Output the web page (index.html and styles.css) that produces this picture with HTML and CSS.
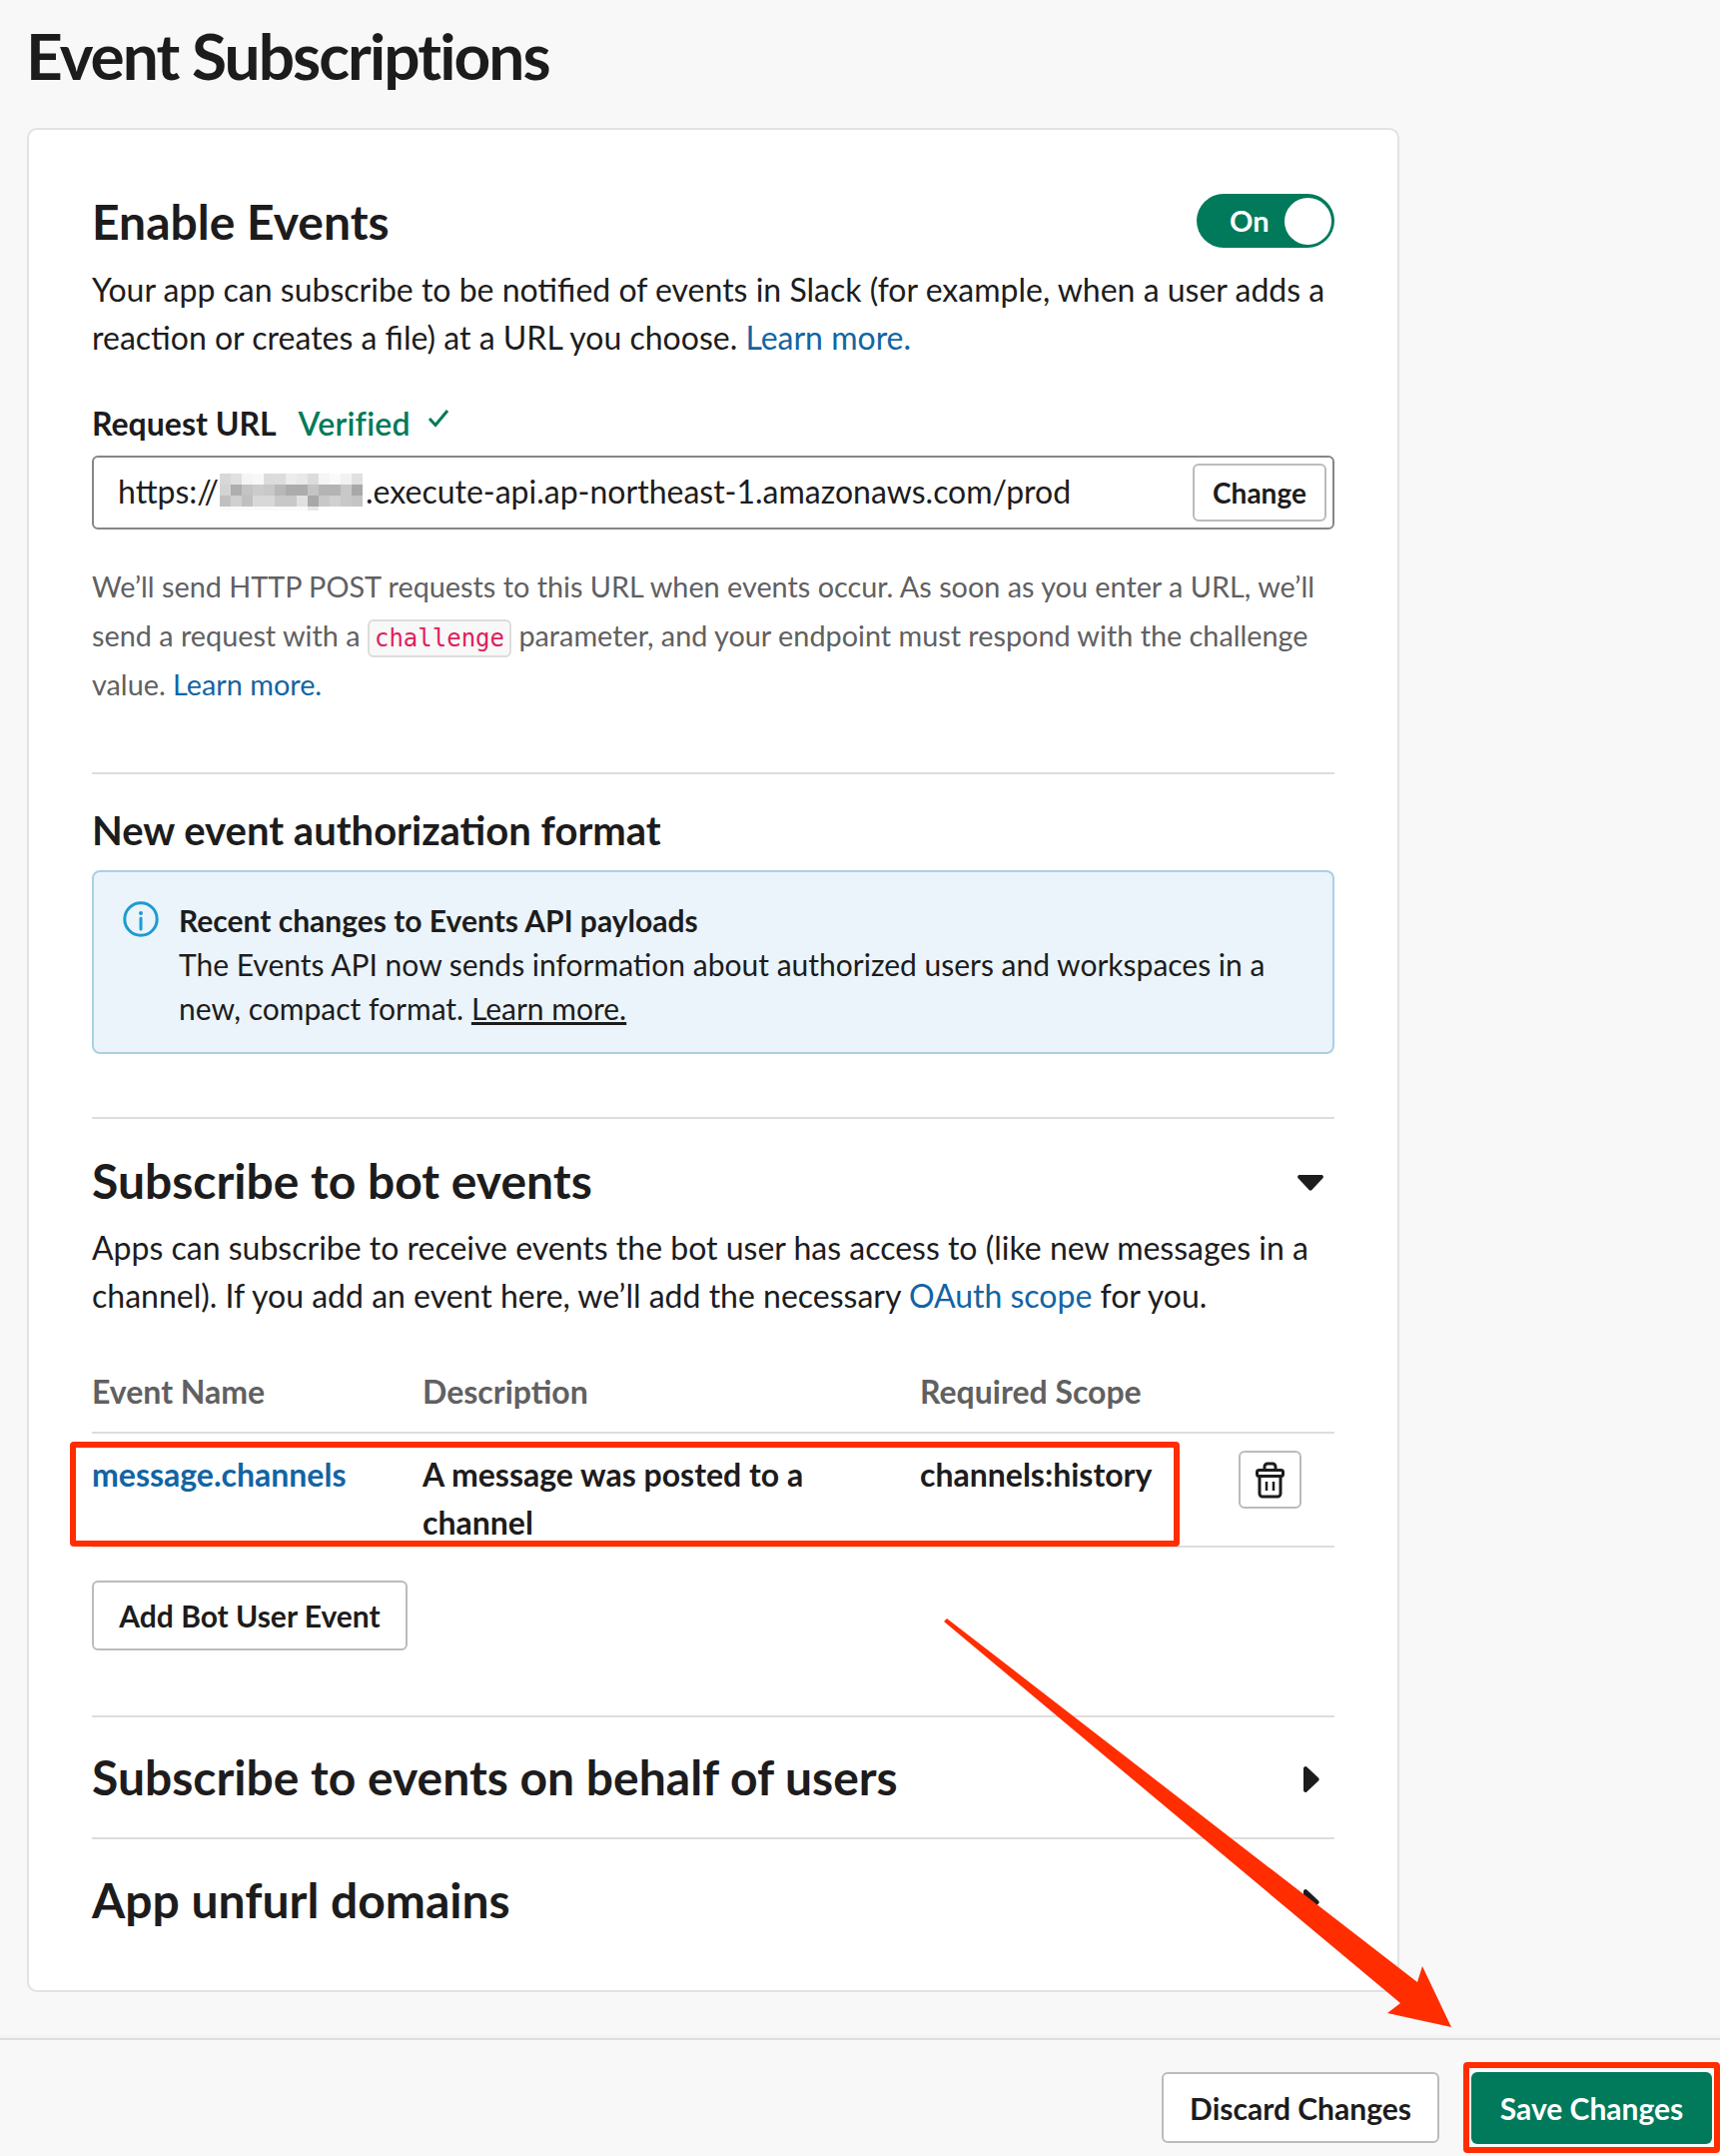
FILE: index.html
```html
<!DOCTYPE html>
<html lang="en">
<head>
  <meta charset="UTF-8" />
  <title>Event Subscriptions</title>
  <link rel="stylesheet" href="styles.css">
</head>
<body>
<div class="page">

  <h1 class="page-title">Event Subscriptions</h1>

  <main class="card">

    <!-- ENABLE EVENTS -->
    <div class="section-head">
      <h2>Enable Events</h2>
      <div class="toggle"><span>On</span><i class="knob"></i></div>
    </div>
    <p class="copy">Your app can subscribe to be notified of events in Slack (for example, when a user adds a reaction or creates a file) at a URL you choose. <a href="#">Learn more.</a></p>

    <div class="url-label">
      <strong>Request URL</strong>
      <span class="verified">Verified</span>
      <svg class="check" width="22" height="20" viewBox="0 0 22 20"><path d="M2 11l6 6.5L20 3" fill="none" stroke="#007a5a" stroke-width="3"/></svg>
    </div>
    <div class="url-input">
      <span class="url-text">https://<svg class="blur" width="143" height="44" viewBox="0 0 13 4" shape-rendering="crispEdges">
        <g><rect x="0" width="1" height="1" fill="#d8d8d8"/><rect x="1" width="1" height="1" fill="#e0e0e0"/><rect x="2" width="1" height="1" fill="#f5f5f5"/><rect x="3" width="1" height="1" fill="#f8f8f8"/><rect x="4" width="2" height="1" fill="#dcdcdc"/><rect x="6" width="1" height="1" fill="#ececec"/><rect x="7" width="1" height="1" fill="#e8e8e8"/><rect x="8" width="1" height="1" fill="#dcdcdc"/><rect x="9" width="1" height="1" fill="#f5f5f5"/><rect x="10" width="1" height="1" fill="#fafafa"/><rect x="11" width="1" height="1" fill="#f2f2f2"/><rect x="12" width="1" height="1" fill="#e0e0e0"/></g>
        <g><rect x="0" y="1" width="1" height="1" fill="#d4d4d4"/><rect x="1" y="1" width="1" height="1" fill="#aeaeae"/><rect x="2" y="1" width="1" height="1" fill="#c4c4c4"/><rect x="3" y="1" width="1" height="1" fill="#cccccc"/><rect x="4" y="1" width="1" height="1" fill="#c8c8c8"/><rect x="5" y="1" width="1" height="1" fill="#b8b8b8"/><rect x="6" y="1" width="2" height="1" fill="#acacac"/><rect x="8" y="1" width="1" height="1" fill="#c4c4c4"/><rect x="9" y="1" width="2" height="1" fill="#b4b4b4"/><rect x="11" y="1" width="1" height="1" fill="#c8c8c8"/><rect x="12" y="1" width="1" height="1" fill="#a8a8a8"/></g>
        <g><rect x="0" y="2" width="1" height="1" fill="#c0c0c0"/><rect x="1" y="2" width="1" height="1" fill="#d0d0d0"/><rect x="2" y="2" width="1" height="1" fill="#c0c0c0"/><rect x="3" y="2" width="2" height="1" fill="#d8d8d8"/><rect x="5" y="2" width="2" height="1" fill="#c8c8c8"/><rect x="7" y="2" width="1" height="1" fill="#e0e0e0"/><rect x="8" y="2" width="1" height="1" fill="#a8a8a8"/><rect x="9" y="2" width="1" height="1" fill="#c8c8c8"/><rect x="10" y="2" width="1" height="1" fill="#d0d0d0"/><rect x="11" y="2" width="1" height="1" fill="#c8c8c8"/><rect x="12" y="2" width="1" height="1" fill="#c4c4c4"/></g>
        <g><rect x="0" y="3" width="8" height="0.4" fill="#fafafa"/><rect x="8" y="3" width="1" height="0.4" fill="#e8e8e8"/></g>
      </svg>.execute-api.ap-northeast-1.amazonaws.com/prod</span>
      <button class="btn btn-small">Change</button>
    </div>

    <p class="help">We’ll send HTTP POST requests to this URL when events occur. As soon as you enter a URL, we’ll send a request with a <code>challenge</code> parameter, and your endpoint must respond with the challenge value. <a href="#">Learn more.</a></p>

    <hr class="rule rule-auth">

    <!-- AUTH FORMAT -->
    <h3>New event authorization format</h3>
    <div class="notice">
      <svg class="notice-icon" width="36" height="36" viewBox="0 0 36 36">
        <circle cx="18" cy="18" r="16.2" fill="none" stroke="#1d9bd1" stroke-width="3"/>
        <circle cx="18" cy="12" r="2" fill="#1d9bd1"/>
        <path d="M18 17v11" stroke="#1d9bd1" stroke-width="3" stroke-linecap="round"/>
      </svg>
      <div>
        <strong>Recent changes to Events API payloads</strong><br>
        The Events API now sends information about authorized users and workspaces in a new, compact format. <a href="#">Learn more.</a>
      </div>
    </div>

    <hr class="rule rule-bot">

    <!-- BOT EVENTS -->
    <div class="section-head bot-head">
      <h2>Subscribe to bot events</h2>
      <svg class="chevron-down" width="26" height="16" viewBox="0 0 26 16"><path d="M2 0h22a2 2 0 0 1 1.4 3.3L14.4 15a2 2 0 0 1-2.8 0L.6 3.3A2 2 0 0 1 2 0z" fill="#1d1c1d"/></svg>
    </div>
    <p class="copy">Apps can subscribe to receive events the bot user has access to (like new messages in a channel). If you add an event here, we’ll add the necessary <a href="#">OAuth scope</a> for you.</p>

    <div class="events-table">
      <div class="events-row events-header">
        <span>Event Name</span>
        <span>Description</span>
        <span>Required Scope</span>
      </div>
      <div class="events-row events-item">
        <a href="#">message.channels</a>
        <span class="event-desc">A message was posted to a channel</span>
        <span>channels:history</span>
        <button class="btn btn-trash">
          <svg width="29" height="37" viewBox="0 0 29 37" fill="none" stroke="#1d1c1d" stroke-width="3">
            <path d="M9 9V5a3 3 0 0 1 3-3h5a3 3 0 0 1 3 3v4"/>
            <rect x="1.5" y="8.5" width="26" height="6" rx="2"/>
            <path d="M4 14.5V32a3 3 0 0 0 3 3h15a3 3 0 0 0 3-3V14.5"/>
            <path d="M11 20v9M18 20v9" stroke-width="2.5"/>
          </svg>
        </button>
      </div>
    </div>

    <button class="btn btn-add">Add Bot User Event</button>

    <!-- COLLAPSED SECTIONS -->
    <div class="collapsed first">
      <h2>Subscribe to events on behalf of users</h2>
      <svg width="16" height="26" viewBox="0 0 16 26"><path d="M0 2a2 2 0 0 1 3.3-1.4L15 11.6a2 2 0 0 1 0 2.8L3.3 25.4A2 2 0 0 1 0 24z" fill="#1d1c1d"/></svg>
    </div>
    <div class="collapsed last">
      <h2>App unfurl domains</h2>
      <svg width="16" height="26" viewBox="0 0 16 26"><path d="M0 2a2 2 0 0 1 3.3-1.4L15 11.6a2 2 0 0 1 0 2.8L3.3 25.4A2 2 0 0 1 0 24z" fill="#1d1c1d"/></svg>
    </div>
  </main>

  <!-- FOOTER -->
  <footer class="footer">
    <button class="btn btn-discard">Discard Changes</button>
    <button class="btn btn-save">Save Changes</button>
  </footer>

  <!-- ANNOTATIONS -->
  <svg class="annotations" width="1722" height="2158" viewBox="0 0 1722 2158">
    <rect x="73" y="1446" width="1105" height="99" rx="1" fill="none" stroke="#ff2d00" stroke-width="6"/>
    <rect x="1468" y="2067" width="251" height="85" rx="1" fill="none" stroke="#ff2d00" stroke-width="6"/>
    <path d="M945 1623L948 1620L1419 1984L1424 1968L1453 2029L1389 2015L1402 2005z" fill="#ff2d00"/>
  </svg>
</div>
</body>
</html>
```

FILE: styles.css
```css
* {
  box-sizing: border-box;
}

body {
  margin: 0;
  background-color: #f8f8f8;
  color: #1d1c1d;
  font-family: Lato, 'Noto Sans', sans-serif;
  font-size: 32px;
  line-height: 48px;
}

a {
  color: #1264a3;
  text-decoration: none;
}

p, h1, h2, h3 {
  margin: 0;
}

.page {
  position: relative;
  height: 2158px;
  overflow: hidden;
}

.page-title {
  margin: 0 0 16px 26px;
  font-size: 64px;
  line-height: 112px;
  letter-spacing: -1.95px;
}

/* ===== CARD ===== */
.card {
  width: 1374px;
  height: 1866px;
  margin-left: 27px;
  padding: 64px 63px 0;
  background-color: white;
  border: 2px solid #e2e2e2;
  border-radius: 10px;
}

h2 {
  font-size: 48px;
  line-height: 56px;
}

h3 {
  margin-top: 31px;
  font-size: 40px;
  line-height: 50px;
}

.section-head {
  display: flex;
  justify-content: space-between;
  align-items: center;
  margin-bottom: 16px;
}

.toggle {
  display: flex;
  align-items: center;
  justify-content: space-between;
  width: 138px;
  height: 54px;
  margin-top: -2px;
  padding: 0 3px 0 33px;
  background-color: #007a5a;
  border-radius: 27px;
  color: white;
  font-size: 29px;
  font-weight: 700;
}

.knob {
  width: 47px;
  height: 47px;
  background-color: white;
  border-radius: 50%;
}

.url-label {
  display: flex;
  align-items: center;
  margin-top: 38px;
}

.url-label strong {
  font-weight: 700;
}

.verified {
  margin-left: 22px;
  color: #007a5a;
  font-weight: 600;
  letter-spacing: 0.2px;
}

.check {
  margin: 0 0 12px 17px;
}

.url-input {
  display: flex;
  align-items: center;
  justify-content: space-between;
  height: 74px;
  margin-top: 8px;
  padding: 0 6px 0 24px;
  border: 2px solid #868686;
  border-radius: 6px;
}

.blur {
  margin: 0 3px 0 1px;
  vertical-align: middle;
}

.btn {
  display: flex;
  align-items: center;
  justify-content: center;
  padding: 0;
  background-color: white;
  border: 2px solid #bbbbbb;
  border-radius: 6px;
  color: #1d1c1d;
  font-family: inherit;
  font-size: 30px;
  font-weight: 700;
}

.btn-small {
  width: 134px;
  height: 58px;
  font-size: 28px;
}

.help {
  margin-top: 33px;
  color: #616061;
  font-size: 28.8px;
  line-height: 49px;
}

code {
  padding: 3px 5px;
  background-color: #f8f8f8;
  border: 2px solid #dddddd;
  border-radius: 6px;
  color: #e01e5a;
  font-family: 'DejaVu Sans Mono', monospace;
  font-size: 24px;
  line-height: 1;
}

.rule {
  height: 2px;
  margin: 0;
  background-color: #dddddd;
  border: 0;
}

.rule-auth {
  margin-top: 63px;
}

.rule-bot {
  margin-top: 63px;
}

.bot-head {
  margin-top: 34px;
  margin-bottom: 15px;
}

.chevron-down {
  margin: 3px 11px 0 0;
}

/* ===== NOTICE ===== */
.notice {
  display: flex;
  gap: 20px;
  height: 184px;
  margin-top: 15px;
  padding: 26px 28px 0 29px;
  background-color: #eaf4fa;
  border: 2px solid #a9d0e6;
  border-radius: 8px;
  font-size: 30px;
  line-height: 44px;
}

.notice-icon {
  flex: none;
  margin-top: 3px;
}

.notice a {
  color: #1d1c1d;
  text-decoration: underline;
}

/* ===== TABLE ===== */
.events-table {
  margin-top: 48px;
}

.events-row {
  display: grid;
  grid-template-columns: 331px 498px 319px 63px;
}

.events-header {
  padding-bottom: 16px;
  border-bottom: 2px solid #dddddd;
  color: #616061;
  font-weight: 700;
}

.events-item {
  height: 114px;
  padding-top: 17px;
  border-bottom: 2px solid #dddddd;
  font-weight: 700;
}

.event-desc {
  padding-right: 30px;
}

.btn-trash {
  width: 63px;
  height: 58px;
}

.btn-add {
  width: 316px;
  height: 70px;
  margin-top: 33px;
}

/* ===== COLLAPSED ===== */
.collapsed {
  display: flex;
  align-items: center;
  justify-content: space-between;
  height: 122px;
  padding-right: 15px;
  border-bottom: 2px solid #dddddd;
}

.collapsed svg {
  margin-top: 3px;
}

.collapsed.first {
  margin-top: 65px;
  border-top: 2px solid #dddddd;
  height: 124px;
}

.collapsed.last {
  border-bottom: 0;
}

/* ===== FOOTER ===== */
.footer {
  display: flex;
  justify-content: flex-end;
  gap: 32px;
  height: 118px;
  margin-top: 46px;
  padding: 32px 8px 0 0;
  border-top: 2px solid #dddddd;
  box-shadow: 0 -2px 3px rgba(0, 0, 0, 0.03);
}

.btn-discard {
  width: 278px;
  height: 71px;
}

.btn-save {
  width: 241px;
  height: 72px;
  background-color: #007a5a;
  border: 0;
  color: white;
}

/* red arrows and boxes drawn over the page */
.annotations {
  position: absolute;
  top: 0;
  left: 0;
  pointer-events: none;
}
```
